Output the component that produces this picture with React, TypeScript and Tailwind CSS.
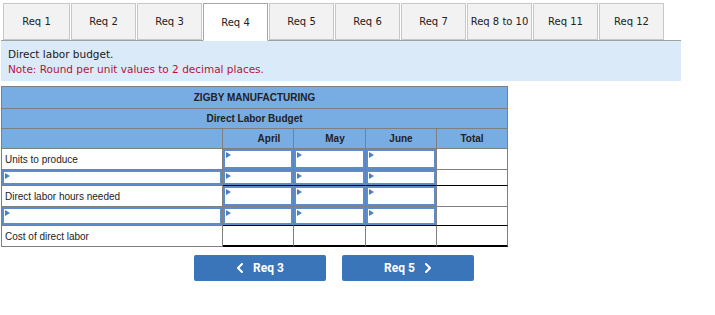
import React from 'react';

const tabs = ['Req 1', 'Req 2', 'Req 3', 'Req 4', 'Req 5', 'Req 6', 'Req 7', 'Req 8 to 10', 'Req 11', 'Req 12'];

// widths incl. right border: label, April, May, June, Total
const cols = ['w-[221px]', 'w-[71px]', 'w-[72px]', 'w-[71px]', 'w-[71px]'];

// header labels sit a bit off centre in the original
const heads = [
  { label: 'April', pad: 'pl-[22px]' },
  { label: 'May', pad: 'pl-[11px]' },
  { label: 'June', pad: '' },
  { label: 'Total', pad: '' },
];

const Flag = () => (
  <span className="absolute top-[1px] left-[1px] w-0 h-0 border-y-[3px] border-y-transparent border-l-[5px] border-l-[#4a7fc4]" />
);

const Input = () => (
  <div className="relative h-full w-full border-2 border-[#5d8ccb] bg-white">
    <Flag />
  </div>
);

type CellProps = {
  col: number;
  h: string;
  bottom?: string;
  className?: string;
  children?: React.ReactNode;
};

const Cell = ({ col, h, bottom = 'border-b border-b-[#7f7f7f]', className = '', children }: CellProps) => (
  <div className={`${cols[col]} ${h} shrink-0 border-r border-r-[#7f7f7f] ${bottom} ${className}`}>{children}</div>
);

const App: React.FC = () => {
  return (
    <div className="w-[715px] h-[315px] bg-white">
      <div className="ml-[1px] w-[680px] pt-[3px]">
        {/* tabs */}
        <div className="flex gap-[1px] pl-[2px] border-b border-[#a0a0a0] font-['DejaVu_Sans',Verdana,sans-serif] text-[10px] text-[#222]">
          {tabs.map((t, i) => {
            const active = t === 'Req 4';
            return (
              <div
                key={t}
                className={`flex items-center justify-center border ${i === 0 ? 'w-[67px]' : 'w-[65px]'} ${
                  active
                    ? 'bg-white border-[#a6a6a6] border-b-white -mb-[1px] h-[38px]'
                    : 'bg-[#f2f2f2] border-[#c8c8c8] h-[37px]'
                }`}
              >
                {t}
              </div>
            );
          })}
        </div>

        {/* instructions */}
        <div className="h-[40px] bg-[#dbeaf8] pl-[7px] pt-[6px] font-['DejaVu_Sans',Verdana,sans-serif] text-[10.5px] leading-[15px]">
          <div className="text-[#1a1a1a]">Direct labor budget.</div>
          <div className="text-[#b8123a]">Note: Round per unit values to 2 decimal places.</div>
        </div>
      </div>

      {/* budget table */}
      <div className="mt-[5px] ml-[1px] w-[507px] border-l border-t border-[#7f7f7f] font-['Liberation_Sans',Arial,sans-serif] text-[10px] text-[#222]">
        <div className="h-[22px] bg-[#78ade4] border-r border-b border-[#7f7f7f] flex items-center justify-center font-bold">
          ZIGBY MANUFACTURING
        </div>
        <div className="h-[20px] bg-[#78ade4] border-r border-b border-[#7f7f7f] flex items-center justify-center font-bold">
          Direct Labor Budget
        </div>
        <div className="flex bg-[#78ade4] font-bold">
          <Cell col={0} h="h-[20px]" />
          {heads.map((m, i) => (
            <Cell key={m.label} col={i + 1} h="h-[20px]" className={`flex items-center justify-center ${m.pad}`}>
              {m.label}
            </Cell>
          ))}
        </div>

        {/* units to produce */}
        <div className="flex">
          <Cell col={0} h="h-[21px]" className="flex items-center pl-[3px]">Units to produce</Cell>
          <Cell col={1} h="h-[21px]"><Input /></Cell>
          <Cell col={2} h="h-[21px]"><Input /></Cell>
          <Cell col={3} h="h-[21px]"><Input /></Cell>
          <Cell col={4} h="h-[21px]" />
        </div>
        <div className="flex">
          <Cell col={0} h="h-[16px]"><Input /></Cell>
          <Cell col={1} h="h-[16px]" bottom="border-b border-b-black"><Input /></Cell>
          <Cell col={2} h="h-[16px]" bottom="border-b border-b-black"><Input /></Cell>
          <Cell col={3} h="h-[16px]" bottom="border-b border-b-black"><Input /></Cell>
          <Cell col={4} h="h-[16px]" bottom="border-b border-b-black" />
        </div>

        {/* hours */}
        <div className="flex">
          <Cell col={0} h="h-[21px]" className="flex items-center pl-[3px]">Direct labor hours needed</Cell>
          <Cell col={1} h="h-[21px]"><Input /></Cell>
          <Cell col={2} h="h-[21px]"><Input /></Cell>
          <Cell col={3} h="h-[21px]"><Input /></Cell>
          <Cell col={4} h="h-[21px]" />
        </div>
        <div className="flex">
          <Cell col={0} h="h-[19px]"><Input /></Cell>
          <Cell col={1} h="h-[19px]" bottom="border-b border-b-black"><Input /></Cell>
          <Cell col={2} h="h-[19px]" bottom="border-b border-b-black"><Input /></Cell>
          <Cell col={3} h="h-[19px]" bottom="border-b border-b-black"><Input /></Cell>
          <Cell col={4} h="h-[19px]" bottom="border-b border-b-black" />
        </div>

        {/* cost */}
        <div className="flex">
          <Cell col={0} h="h-[21px]" className="flex items-center pl-[3px]">Cost of direct labor</Cell>
          <Cell col={1} h="h-[21px]" bottom="border-b-2 border-b-black" />
          <Cell col={2} h="h-[21px]" bottom="border-b-2 border-b-black" />
          <Cell col={3} h="h-[21px]" bottom="border-b-2 border-b-black" />
          <Cell col={4} h="h-[21px]" bottom="border-b-2 border-b-black" />
        </div>
      </div>

      {/* nav buttons */}
      <div className="flex gap-[16px] ml-[194px] mt-[8px] font-['Roboto',sans-serif] font-bold text-[12px] text-white">
        <button className="w-[132px] h-[26px] bg-[#3a74b9] rounded-[2px] flex items-center justify-center gap-[9px]">
          <svg width="8" height="10" viewBox="0 0 8 10" fill="none">
            <path d="M6 1L2 5L6 9" stroke="white" strokeWidth="2" strokeLinecap="round" strokeLinejoin="round" />
          </svg>
          Req 3
        </button>
        <button className="w-[132px] h-[26px] bg-[#3a74b9] rounded-[2px] flex items-center justify-center gap-[9px]">
          Req 5
          <svg width="8" height="10" viewBox="0 0 8 10" fill="none">
            <path d="M2 1L6 5L2 9" stroke="white" strokeWidth="2" strokeLinecap="round" strokeLinejoin="round" />
          </svg>
        </button>
      </div>
    </div>
  );
};

export default App;
